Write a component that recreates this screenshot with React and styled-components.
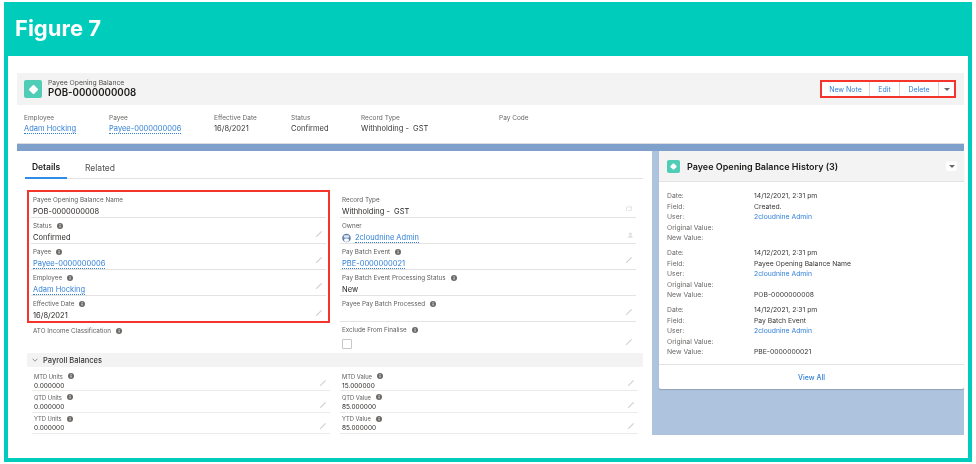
import React from 'react';
import styled, { createGlobalStyle } from 'styled-components';

const teal = '#00ccbb';
const link = '#2f7fd6';
const red = '#f5352b';

const GlobalStyle = createGlobalStyle`
  html, body {
    margin: 0;
    background: #fff;
    font-family: Inter, "Liberation Sans", sans-serif;
    color: #2b2826;
  }
`;

const Frame = styled.div`
  box-sizing: border-box;
  width: 968px;
  height: 460px;
  margin: 2px 4px;
  border: solid ${teal};
  border-width: 0 4px 4px;
  background: #fff;
  overflow: hidden;
  filter: blur(0.3px);
`;

const TitleBar = styled.div`
  display: flex;
  align-items: center;
  height: 54px;
  margin: 0 -4px;
  padding: 0 0 2px 11px;
  box-sizing: border-box;
  background: ${teal};
  color: #fff;
  font-weight: 700;
  font-size: 22px;
`;

const Sheet = styled.div`
  padding: 17px 4px 0 9px;
`;

const RecordBar = styled.div`
  display: flex;
  align-items: center;
  height: 32px;
  padding: 0 8px 0 7px;
  background: #f3f3f3;
`;

const BigIcon = styled.div`
  display: flex;
  align-items: center;
  justify-content: center;
  width: ${(p) => p.$size}px;
  height: ${(p) => p.$size}px;
  flex: none;
  border-radius: 2px;
  background: #4fcdb6;
`;

const Diamond = styled.div`
  width: ${(p) => p.$size}px;
  height: ${(p) => p.$size}px;
  background: #fff;
  border-radius: 1px;
  transform: rotate(45deg);
`;

const RecordTitle = styled.div`
  margin-left: 6px;
  flex: 1;
`;

const ObjectName = styled.div`
  font-size: 6.8px;
  line-height: 8px;
  color: #55524f;
`;

const RecordName = styled.div`
  font-size: 9.7px;
  line-height: 12px;
  font-weight: 600;
  color: #1c1a18;
`;

const Actions = styled.div`
  display: flex;
  width: 136px;
  height: 18px;
  box-sizing: border-box;
  border: 2px solid ${red};
  background: #fff;
`;

const ActionButton = styled.div`
  display: flex;
  align-items: center;
  justify-content: center;
  width: ${(p) => p.$width}px;
  border-right: ${(p) => (p.$last ? 'none' : '1px solid #d9d7d5')};
  box-sizing: border-box;
  color: ${link};
  font-size: 7px;
`;

const Caret = styled.div`
  width: 0;
  height: 0;
  border-style: solid;
  border-color: #6b6866 transparent transparent;
  border-width: 3.5px 3px 0;
`;

const Highlights = styled.div`
  display: flex;
  height: 38px;
  padding: 9px 0 0 7px;
  box-sizing: border-box;
`;

const Highlight = styled.div`
  width: ${(p) => p.$width}px;
  flex: none;
`;

const SmallLabel = styled.div`
  font-size: 6.5px;
  line-height: 9px;
  color: #6b6866;
`;

const HighlightValue = styled.div`
  font-size: 7.5px;
  line-height: 11px;
  white-space: pre;
  color: #3a3735;
`;

const RecordLink = styled.span`
  color: ${link};
  border-bottom: 1px dotted ${link};
`;

const Banner = styled.div`
  height: 8px;
  background: #80a0cc;
  border-top: 1px solid #dcdcdc;
  box-sizing: border-box;
  overflow: hidden;
`;

const Main = styled.div`
  display: flex;
  gap: 7px;
  height: 284px;
  background: #aec3de;
`;

const DetailCard = styled.div`
  width: 635px;
  flex: none;
  background: #fff;
`;

const Tabs = styled.div`
  display: flex;
  box-sizing: border-box;
  height: 28px;
  margin: 0 9px 0 8px;
  border-bottom: 1px solid #e2e1e0;
`;

const Tab = styled.div`
  display: flex;
  flex: none;
  align-items: center;
  justify-content: center;
  width: ${(p) => p.$width}px;
  height: 28px;
  padding-top: 5px;
  box-sizing: border-box;
  font-size: 8.5px;
  font-weight: ${(p) => (p.$active ? 600 : 400)};
  color: ${(p) => (p.$active ? '#1c1a18' : '#55524f')};
  border-bottom: ${(p) => (p.$active ? '2px solid #2f8be6' : 'none')};
`;

const Columns = styled.div`
  display: grid;
  grid-template-columns: 303px 296px;
  column-gap: 10px;
  padding: 13px 0 0 10px;
  height: 174px;
  box-sizing: border-box;
`;

const Column = styled.div`
  display: flex;
  flex-direction: column;
`;

const Highlighted = styled.div`
  box-sizing: border-box;
  width: 303px;
  height: 133px;
  margin-top: -2px;
  padding: 0 2px;
  border: 2px solid ${red};
`;

const Row = styled.div`
  position: relative;
  box-sizing: border-box;
  height: ${(p) => p.$height || 26}px;
  margin-left: ${(p) => (p.$inset ? 4 : 0)}px;
  padding: ${(p) => (p.$small ? '1px 2px 0' : '2px 2px 0')};
  border-bottom: ${(p) => (p.$flat ? 'none' : `1px solid ${p.$small ? '#ecebea' : '#e4e3e2'}`)};
`;

const Label = styled.div`
  display: flex;
  align-items: center;
  gap: 5px;
  height: ${(p) => (p.$small ? 10 : 11)}px;
  font-size: ${(p) => (p.$small ? 5.8 : 6.3)}px;
  color: #5f5c5a;
`;

const Value = styled.div`
  display: flex;
  align-items: center;
  gap: 4px;
  height: ${(p) => (p.$small ? 9 : 13)}px;
  white-space: pre;
  font-size: ${(p) => (p.$small ? 6.5 : 7.5)}px;
  color: #2b2826;
`;

const Trailing = styled.div`
  position: absolute;
  right: 3px;
  bottom: ${(p) => (p.$small ? 3 : 5)}px;
  display: flex;
`;

const Checkbox = styled.div`
  width: 8px;
  height: 8px;
  border: 1px solid #c9c7c5;
  border-radius: 1px;
  margin-top: 4px;
`;

const Section = styled.div`
  display: flex;
  align-items: center;
  gap: 5px;
  height: 14px;
  margin: 0 9px 0 10px;
  padding-left: 5px;
  background: #f3f3f3;
  font-size: 7.5px;
  font-weight: 500;
  color: #3a3735;
`;

const BalanceGrid = styled.div`
  display: grid;
  grid-template-columns: 298px 298px;
  column-gap: 10px;
  padding: 3px 0 0 15px;
`;

const SideColumn = styled.div`
  width: 305px;
  flex: none;
`;

const HistoryCard = styled.div`
  height: 238px;
  background: #fff;
  border-radius: 0 0 2px 2px;
  box-shadow: 0 1px 1px rgba(60, 60, 60, 0.25);
`;

const HistoryHeader = styled.div`
  display: flex;
  align-items: center;
  height: 31px;
  padding: 0 7px 0 8px;
  background: #f3f3f3;
  border-bottom: 1px solid #e4e3e2;
  box-sizing: border-box;
`;

const HistoryTitle = styled.div`
  flex: 1;
  margin-left: 7px;
  font-size: 9px;
  font-weight: 600;
  color: #1c1a18;
`;

const MenuButton = styled.div`
  display: flex;
  align-items: center;
  justify-content: center;
  width: 11px;
  height: 10px;
  background: #fff;
  border-radius: 2px;
`;

const HistoryList = styled.div`
  display: flex;
  flex-direction: column;
  gap: 4.5px;
  height: 182px;
  padding: 8.5px 8px 0;
  box-sizing: border-box;
`;

const HistoryEntry = styled.div`
  display: grid;
  grid-template-columns: 87px 1fr;
  grid-auto-rows: 10.5px;
  align-items: center;
  font-size: 6.8px;
`;

const HistoryLabel = styled.div`
  color: #6b6866;
`;

const HistoryValue = styled.div`
  color: ${(p) => (p.$link ? link : '#3a3735')};
`;

const ViewAll = styled.div`
  display: flex;
  align-items: center;
  justify-content: center;
  height: 25px;
  border-top: 1px solid #e4e3e2;
  color: ${link};
  font-size: 7px;
  font-weight: 500;
`;

const InfoIcon = () => (
  <svg width="6" height="6" viewBox="0 0 6 6">
    <circle cx="3" cy="3" r="3" fill="#6b6866" />
    <rect x="2.6" y="2.5" width="0.9" height="2" fill="#fff" />
    <rect x="2.6" y="1.2" width="0.9" height="0.8" fill="#fff" />
  </svg>
);

const PencilIcon = () => (
  <svg width="8" height="8" viewBox="0 0 8 8">
    <path d="M0.8 7.2 L1.2 6 L6.2 1 L7 1.8 L2 6.8 Z" fill="#d0cfcd" />
  </svg>
);

const SwapIcon = () => (
  <svg width="8" height="8" viewBox="0 0 8 8" fill="none" stroke="#e2e1e0" strokeWidth="0.8">
    <path d="M1.5 7V3h5M5 1.5 6.5 3 5 4.5" />
    <path d="M6.5 3v3.5H3" />
  </svg>
);

const LockIcon = () => (
  <svg width="6" height="6" viewBox="0 0 8 8">
    <circle cx="4.5" cy="2.5" r="2" fill="#e2e1e0" />
    <path d="M1 7.5C1.5 5 3 4.5 4.5 4.5S7.5 5 7.5 7.5Z" fill="#e2e1e0" />
  </svg>
);

const Avatar = () => (
  <svg width="9" height="10" viewBox="0 0 9 10">
    <circle cx="4.5" cy="5" r="4.3" fill="#5f7fa8" />
    <rect x="1.8" y="2.2" width="5.4" height="2.6" rx="1" fill="#dfe8f2" />
    <rect x="2.2" y="5.4" width="4.6" height="3.4" rx="1" fill="#fff" />
  </svg>
);

const Chevron = () => (
  <svg width="6" height="4" viewBox="0 0 6 4" fill="none" stroke="#6b6866" strokeWidth="0.7">
    <path d="M0.5 0.7 3 3.2 5.5 0.7" />
  </svg>
);

const BannerPattern = () => (
  <svg width="947" height="7" viewBox="0 0 947 7" fill="none" stroke="#a6bede" strokeWidth="0.8">
    {Array.from({ length: 24 }, (_, i) => (
      <path key={i} d={`M${i * 40} 7C${i * 40 + 8} 1 ${i * 40 + 16} 1 ${i * 40 + 22} 7M${i * 40 + 26} 0L${i * 40 + 36} 7`} />
    ))}
  </svg>
);

const Field = ({ label, value, isLink, info, trailing, small, height, flat, inset, children }) => (
  <Row $small={small} $height={height} $flat={flat} $inset={inset}>
    <Label $small={small}>
      {label}
      {info && <InfoIcon />}
    </Label>
    <Value $small={small}>
      {children}
      {isLink ? <RecordLink>{value}</RecordLink> : value}
    </Value>
    {trailing && <Trailing $small={small}>{trailing}</Trailing>}
  </Row>
);

const highlights = [
  { label: 'Employee', value: 'Adam Hocking', isLink: true, width: 85 },
  { label: 'Payee', value: 'Payee-0000000006', isLink: true, width: 105 },
  { label: 'Effective Date', value: '16/8/2021', width: 77 },
  { label: 'Status', value: 'Confirmed', width: 70 },
  { label: 'Record Type', value: 'Withholding -  GST', width: 138 },
  { label: 'Pay Code', value: '', width: 100 },
];

const redFields = [
  { label: 'Payee Opening Balance Name', value: 'POB-0000000008' },
  { label: 'Status', value: 'Confirmed', info: true },
  { label: 'Payee', value: 'Payee-0000000006', info: true, isLink: true },
  { label: 'Employee', value: 'Adam Hocking', info: true, isLink: true },
  { label: 'Effective Date', value: '16/8/2021', info: true, flat: true },
];

const balances = [
  [
    { label: 'MTD Units', value: '0.000000' },
    { label: 'QTD Units', value: '0.000000' },
    { label: 'YTD Units', value: '0.000000' },
  ],
  [
    { label: 'MTD Value', value: '15.000000' },
    { label: 'QTD Value', value: '85.000000' },
    { label: 'YTD Value', value: '85.000000' },
  ],
];

const history = [
  { field: 'Created.', value: '' },
  { field: 'Payee Opening Balance Name', value: 'POB-0000000008' },
  { field: 'Pay Batch Event', value: 'PBE-0000000021' },
];

const App = () => (
  <>
    <GlobalStyle />
    <Frame>
      <TitleBar>Figure 7</TitleBar>
      <Sheet>
        <RecordBar>
          <BigIcon $size={18}>
            <Diamond $size={7} />
          </BigIcon>
          <RecordTitle>
            <ObjectName>Payee Opening Balance</ObjectName>
            <RecordName>POB-0000000008</RecordName>
          </RecordTitle>
          <Actions>
            <ActionButton $width={48}>New Note</ActionButton>
            <ActionButton $width={30}>Edit</ActionButton>
            <ActionButton $width={39}>Delete</ActionButton>
            <ActionButton $width={15} $last>
              <Caret />
            </ActionButton>
          </Actions>
        </RecordBar>
        <Highlights>
          {highlights.map(({ label, value, isLink, width }) => (
            <Highlight key={label} $width={width}>
              <SmallLabel>{label}</SmallLabel>
              <HighlightValue>{isLink ? <RecordLink>{value}</RecordLink> : value}</HighlightValue>
            </Highlight>
          ))}
        </Highlights>
        <Banner>
          <BannerPattern />
        </Banner>
        <Main>
          <DetailCard>
            <Tabs>
              <Tab $width={42} $active>Details</Tab>
              <Tab $width={66}>Related</Tab>
            </Tabs>
            <Columns>
              <Column>
                <Highlighted>
                  {redFields.map((field, i) => (
                    <Field key={field.label} {...field} trailing={i > 0 && <PencilIcon />} />
                  ))}
                </Highlighted>
                <Field label="ATO Income Classification" info flat inset />
              </Column>
              <Column>
                <Field label="Record Type" value="Withholding -  GST" trailing={<SwapIcon />} />
                <Field label="Owner" value="2cloudnine Admin" isLink trailing={<LockIcon />}>
                  <Avatar />
                </Field>
                <Field label="Pay Batch Event" value="PBE-0000000021" isLink info trailing={<PencilIcon />} />
                <Field label="Pay Batch Event Processing Status" value="New" info />
                <Field label="Payee Pay Batch Processed" info trailing={<PencilIcon />} />
                <Field label="Exclude From Finalise" info trailing={<PencilIcon />} height={29} flat>
                  <Checkbox />
                </Field>
              </Column>
            </Columns>
            <Section>
              <Chevron />
              Payroll Balances
            </Section>
            <BalanceGrid>
              {balances.map((column, i) => (
                <Column key={i}>
                  {column.map((field) => (
                    <Field key={field.label} {...field} info small height={21.3} trailing={<PencilIcon />} />
                  ))}
                </Column>
              ))}
            </BalanceGrid>
          </DetailCard>
          <SideColumn>
            <HistoryCard>
              <HistoryHeader>
                <BigIcon $size={13}>
                  <Diamond $size={5} />
                </BigIcon>
                <HistoryTitle>Payee Opening Balance History (3)</HistoryTitle>
                <MenuButton>
                  <Caret />
                </MenuButton>
              </HistoryHeader>
              <HistoryList>
                {history.map(({ field, value }) => (
                  <HistoryEntry key={field}>
                    <HistoryLabel>Date:</HistoryLabel>
                    <HistoryValue>14/12/2021, 2:31 pm</HistoryValue>
                    <HistoryLabel>Field:</HistoryLabel>
                    <HistoryValue>{field}</HistoryValue>
                    <HistoryLabel>User:</HistoryLabel>
                    <HistoryValue $link>2cloudnine Admin</HistoryValue>
                    <HistoryLabel>Original Value:</HistoryLabel>
                    <HistoryValue />
                    <HistoryLabel>New Value:</HistoryLabel>
                    <HistoryValue>{value}</HistoryValue>
                  </HistoryEntry>
                ))}
              </HistoryList>
              <ViewAll>View All</ViewAll>
            </HistoryCard>
          </SideColumn>
        </Main>
      </Sheet>
    </Frame>
  </>
);

export default App;
